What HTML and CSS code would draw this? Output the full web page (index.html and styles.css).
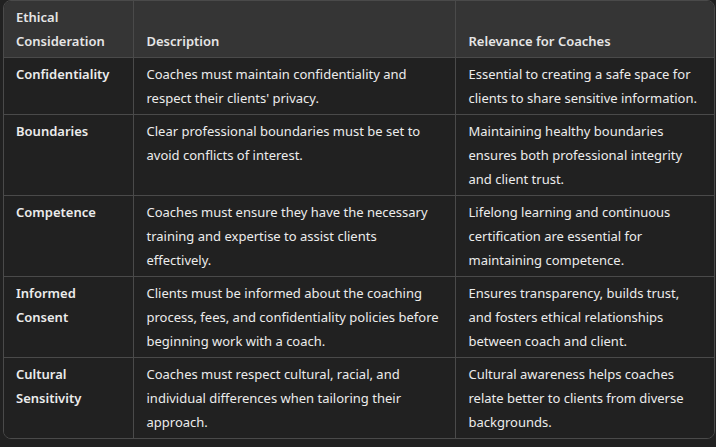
FILE: index.html
```html
<!DOCTYPE html>
<html>
<head>
<meta charset="utf-8">
<link rel="stylesheet" href="styles.css">
</head>
<body>
<div class="wrap">
<table class="grid">
<colgroup><col class="c1"><col class="c2"><col class="c3"></colgroup>
<thead>
<tr><th>Ethical Consideration</th><th>Description</th><th>Relevance for Coaches</th></tr>
</thead>
<tbody>
<tr><td class="key">Confidentiality</td><td>Coaches must maintain confidentiality and respect their clients' privacy.</td><td>Essential to creating a safe space for clients to share sensitive information.</td></tr>
<tr><td class="key">Boundaries</td><td>Clear professional boundaries must be set to avoid conflicts of interest.</td><td>Maintaining healthy boundaries ensures both professional integrity and client trust.</td></tr>
<tr><td class="key">Competence</td><td>Coaches must ensure they have the necessary training and expertise to assist clients effectively.</td><td>Lifelong learning and continuous certification are essential for maintaining competence.</td></tr>
<tr><td class="key">Informed Consent</td><td>Clients must be informed about the coaching process, fees, and confidentiality policies before beginning work with a coach.</td><td>Ensures transparency, builds trust, and fosters ethical relationships between coach and client.</td></tr>
<tr><td class="key">Cultural Sensitivity</td><td>Coaches must respect cultural, racial, and individual differences when tailoring their approach.</td><td>Cultural awareness helps coaches relate better to clients from diverse backgrounds.</td></tr>
</tbody>
</table>
</div>
</body>
</html>
```
FILE: styles.css
```css
html, body {
  margin: 0;
  padding: 0;
  background: #212121;
}
body {
  font-family: "Noto Sans", "Open Sans", sans-serif;
  font-size: 13px;
  color: #ececec;
}
.wrap {
  margin-left: 3px;
  width: 710px;
  border: 1px solid #4a4a4a;
  border-radius: 8px;
  overflow: hidden;
}
.grid {
  width: 100%;
  border-collapse: collapse;
  table-layout: fixed;
}
.c1 { width: 129px; }
.c2 { width: 322px; }
.c3 { width: auto; }
th, td {
  padding: 4px 12px 4px 13px;
  line-height: 24px;
  text-align: left;
  border-left: 1px solid #4a4a4a;
  border-top: 1px solid #4a4a4a;
}
th:first-child, td:first-child { border-left: none; padding-left: 12px; }
thead tr th { border-top: none; }
th {
  background: #353535;
  font-weight: 600;
  vertical-align: bottom;
  color: #e6e6e6;
}
td {
  vertical-align: top;
  background: #212121;
}
td.key { font-weight: 600; }
```
